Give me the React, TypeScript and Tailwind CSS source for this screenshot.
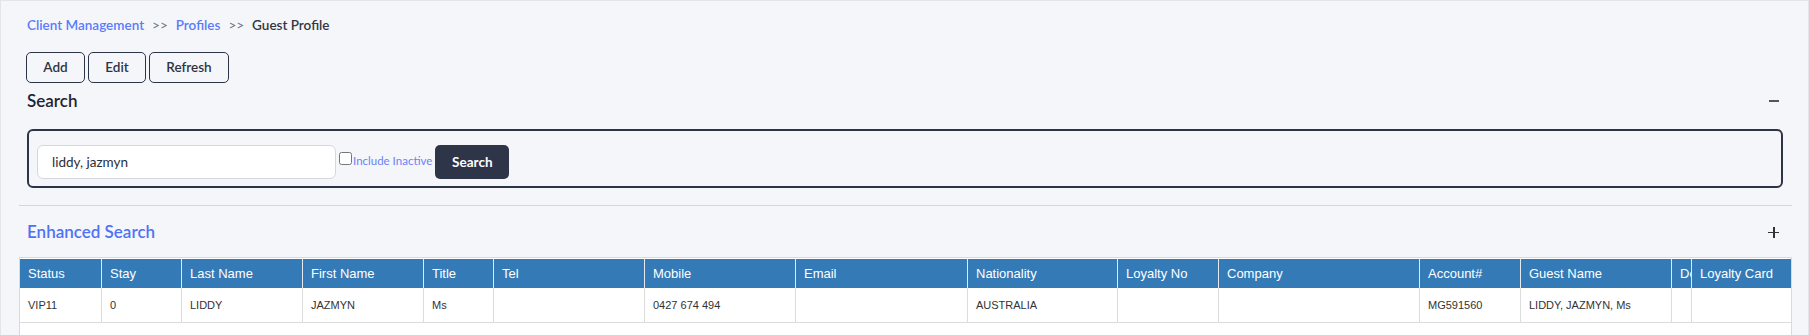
import React from "react";

const cols: { name: string; w: string; val: string }[] = [
  { name: "Status", w: "w-[81px]", val: "VIP11" },
  { name: "Stay", w: "w-[80px]", val: "0" },
  { name: "Last Name", w: "w-[121px]", val: "LIDDY" },
  { name: "First Name", w: "w-[121px]", val: "JAZMYN" },
  { name: "Title", w: "w-[70px]", val: "Ms" },
  { name: "Tel", w: "w-[151px]", val: "" },
  { name: "Mobile", w: "w-[151px]", val: "0427 674 494" },
  { name: "Email", w: "w-[172px]", val: "" },
  { name: "Nationality", w: "w-[150px]", val: "AUSTRALIA" },
  { name: "Loyalty No", w: "w-[101px]", val: "" },
  { name: "Company", w: "w-[201px]", val: "" },
  { name: "Account#", w: "w-[101px]", val: "MG591560" },
  { name: "Guest Name", w: "w-[151px]", val: "LIDDY, JAZMYN, Ms" },
  { name: "De", w: "w-[20px]", val: "" },
  { name: "Loyalty Card", w: "w-[101px]", val: "" },
];

export default function App() {
  const top = { fontFamily: 'Lato, "Noto Sans", sans-serif' };
  const tbl = { fontFamily: '"Liberation Sans", Arial, sans-serif' };
  return (
    <div
      className="w-full h-[335px] overflow-hidden bg-[#f5f6fa] border-t border-l border-r border-[#e3e5ea] px-[16px]"
      style={top}
    >
      {/* breadcrumb */}
      <div className="mt-[15px] h-[18px] pl-[10px] flex items-center text-[13.5px] font-semibold leading-[18px]">
        <span className="text-[#5b7bfb]">Client Management</span>
        <span className="text-[#6b7280] font-normal mx-[8px]">&gt;&gt;</span>
        <span className="text-[#5b7bfb]">Profiles</span>
        <span className="text-[#6b7280] font-normal mx-[8px]">&gt;&gt;</span>
        <span className="text-[#333842]">Guest Profile</span>
      </div>

      {/* buttons */}
      <div className="mt-[18px] pl-[9px] flex gap-[3px]">
        <button className="w-[59px] h-[31px] border border-[#2d3446] rounded-[5px] text-[13.5px] font-semibold text-[#2d3446] bg-transparent">
          Add
        </button>
        <button className="w-[58px] h-[31px] border border-[#2d3446] rounded-[5px] text-[13.5px] font-semibold text-[#2d3446] bg-transparent">
          Edit
        </button>
        <button className="w-[80px] h-[31px] border border-[#2d3446] rounded-[5px] text-[13.5px] font-semibold text-[#2d3446] bg-transparent">
          Refresh
        </button>
      </div>

      {/* Search header */}
      <div className="mt-[6px] h-[24px] pl-[10px] pr-[13px] flex items-center justify-between">
        <span className="text-[17px] font-semibold text-[#1f2430]">Search</span>
        <span className="w-[10px] h-[2px] bg-[#555]" />
      </div>

      {/* Search box */}
      <div className="mt-[16px] ml-[10px] mr-[9px] h-[59px] border-2 border-[#2d3446] rounded-[6px] pl-[8px] pt-[14px]">
        <div className="flex items-start">
          <div className="w-[299px] h-[34px] bg-white border border-[#d5d8e0] rounded-[6px] flex items-center pl-[14px] text-[13.5px] text-[#2a2f3a]">
            liddy, jazmyn
          </div>
          <input
            type="checkbox"
            className="ml-[3px] mt-[7px] w-[13px] h-[13px] m-0"
          />
          <span className="mt-[8px] ml-[1px] text-[11.5px] text-[#6b83f6] leading-[16px]">
            Include Inactive
          </span>
          <button className="ml-[3px] w-[74px] h-[34px] bg-[#2f3549] rounded-[5px] text-white text-[13.5px] font-bold">
            Search
          </button>
        </div>
      </div>

      {/* separator */}
      <div className="mt-[17px] ml-[2px] h-[1px] bg-[#d3d6dd]" />

      {/* Enhanced header */}
      <div className="mt-[14px] h-[24px] pl-[10px] pr-[13px] flex items-center justify-between">
        <span className="text-[17px] font-semibold text-[#4f72f5]">Enhanced Search</span>
        <span className="relative w-[11px] h-[11px]">
          <span className="absolute left-0 top-[5px] w-[11px] h-[1.5px] bg-[#333]" />
          <span className="absolute top-0 left-[5px] h-[11px] w-[1.5px] bg-[#333]" />
        </span>
      </div>

      {/* table */}
      <div
        className="mt-[13px] ml-[2px] h-[100px] bg-white border border-[#d6dae2] pt-[1px]"
        style={tbl}
      >
        <div className="flex h-[29px] bg-[#337ab7]">
          {cols.map((c, i) => (
            <div
              key={c.name}
              className={`${c.w} shrink-0 h-full flex items-center overflow-hidden whitespace-nowrap pl-[8px] text-[13px] text-white ${
                i > 0 ? "border-l border-[#e4e9f0]" : ""
              }`}
            >
              {c.name}
            </div>
          ))}
        </div>
        <div className="flex h-[35px] border-b border-[#dcdcdc]">
          {cols.map((c, i) => (
            <div
              key={c.name}
              className={`${c.w} shrink-0 h-full flex items-center overflow-hidden whitespace-nowrap pl-[8px] text-[11px] text-[#333] ${
                i > 0 ? "border-l border-[#dcdcdc]" : ""
              }`}
            >
              {c.val}
            </div>
          ))}
        </div>
      </div>
    </div>
  );
}
